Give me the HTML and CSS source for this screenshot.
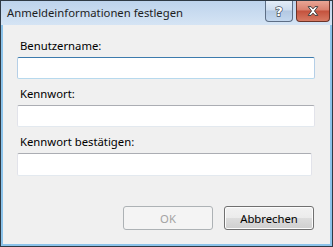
FILE: index.html
```html
<!DOCTYPE html>
<html lang="de">
<head>
    <meta charset="UTF-8">
    <title>Anmeldeinformationen festlegen</title>
    <link rel="stylesheet" href="styles.css">
</head>
<body>
    <div class="window">
        <div class="titlebar">
            <span class="title">Anmeldeinformationen festlegen</span>
            <div class="caption-btns">
                <button class="cap-btn help" title="Hilfe">
                    <svg width="28" height="20" viewBox="0 0 28 20">
                        <text x="14" y="15" text-anchor="middle" class="help-glyph">?</text>
                    </svg>
                </button>
                <button class="cap-btn close" title="Schließen">
                    <svg width="33" height="20" viewBox="0 0 33 20">
                        <path d="M11.5 5.5 h3 l2 2.3 l2 -2.3 h3 l-3.5 4.5 l3.5 4.5 h-3 l-2 -2.3 l-2 2.3 h-3 l3.5 -4.5 z" fill="#fff" stroke="#3b3b3b" stroke-width="1" stroke-linejoin="round"/>
                    </svg>
                </button>
            </div>
        </div>

        <div class="client">
            <div class="fields">
                <label class="field-label" for="user">Benutzername:</label>
                <input class="textbox hover" id="user" type="text">

                <label class="field-label" for="pw">Kennwort:</label>
                <input class="textbox" id="pw" type="password">

                <label class="field-label" for="pw2">Kennwort bestätigen:</label>
                <input class="textbox narrow" id="pw2" type="password">
            </div>

            <div class="actions">
                <button class="btn" disabled>OK</button>
                <button class="btn">Abbrechen</button>
            </div>
        </div>
    </div>
</body>
</html>
```

FILE: styles.css
```css
body {
    margin: 0;
    font-family: "Noto Sans", "Open Sans", sans-serif;
    font-size: 11.3px;
    background: #fff;
}

.window {
    width: 333px;
    height: 247px;
    box-sizing: border-box;
    border: 1px solid #2f3a45;
    background: #8cc3ea;
    padding: 0 2px 2px 2px;
    display: flex;
    flex-direction: column;
}

.titlebar {
    height: 24px;
    margin: 0 -2px;
    padding: 0 2px 0 6px;
    background: linear-gradient(#bdd3ec, #d5e4f4);
    display: flex;
    align-items: flex-start;
    justify-content: space-between;
}

.title {
    color: #1e1e1e;
    line-height: 24px;
}

.caption-btns {
    display: flex;
    gap: 3px;
}

.cap-btn {
    height: 21px;
    padding: 0;
    margin: 0;
    border: 1px solid #5d6e85;
    border-top: none;
    border-radius: 0 0 4px 4px;
    display: flex;
    align-items: center;
    justify-content: center;
}

.cap-btn svg {
    display: block;
}

.help {
    width: 28px;
    background: linear-gradient(#e3ecf7 0%, #cddcee 45%, #b3c8e2 50%, #c3d7ee 100%);
}

.close {
    width: 34px;
    border-color: #6b3328;
    background: linear-gradient(#e8a595 0%, #d9806e 45%, #c4523d 50%, #d77a63 100%);
}

.help-glyph {
    font-family: "DejaVu Sans", sans-serif;
    font-weight: bold;
    font-size: 14px;
    fill: #fff;
    stroke: #3e4a5a;
    stroke-width: 1.4;
    paint-order: stroke;
}

.client {
    flex: 1;
    background: #f0f0f0;
    display: flex;
    flex-direction: column;
    justify-content: space-between;
    padding: 13px 15px 14px 14px;
}

.fields {
    display: flex;
    flex-direction: column;
}

.field-label {
    color: #000;
    line-height: 16px;
    margin-left: 3px;
    margin-bottom: 3px;
}

.textbox {
    height: 22px;
    box-sizing: border-box;
    margin: 0 0 7px 0;
    border: 1px solid #e2e3ea;
    border-top-color: #abadb3;
    border-bottom-color: #e3e9ef;
    background: #fff;
    border-radius: 2px;
    outline: none;
}

.textbox.hover {
    border-color: #b5cfe7;
    border-top-color: #3d7bad;
    border-bottom-color: #b7d9ed;
}

.textbox.narrow {
    height: 23px;
    margin-right: 3px;
}

.actions {
    display: flex;
    justify-content: flex-end;
    gap: 11px;
    padding-right: 1px;
}

.btn {
    width: 90px;
    height: 24px;
    font-family: inherit;
    font-size: 11.3px;
    color: #000;
    border: 1px solid #707070;
    border-radius: 3px;
    box-shadow: inset 0 0 0 1px #fcfcfc;
    background: linear-gradient(#f2f2f2 0%, #ebebeb 50%, #dddddd 50%, #cfcfcf 100%);
}

.btn:disabled {
    color: #a3a3a3;
    border-color: #adb2b5;
    box-shadow: none;
    background: #f4f4f4;
}
```
